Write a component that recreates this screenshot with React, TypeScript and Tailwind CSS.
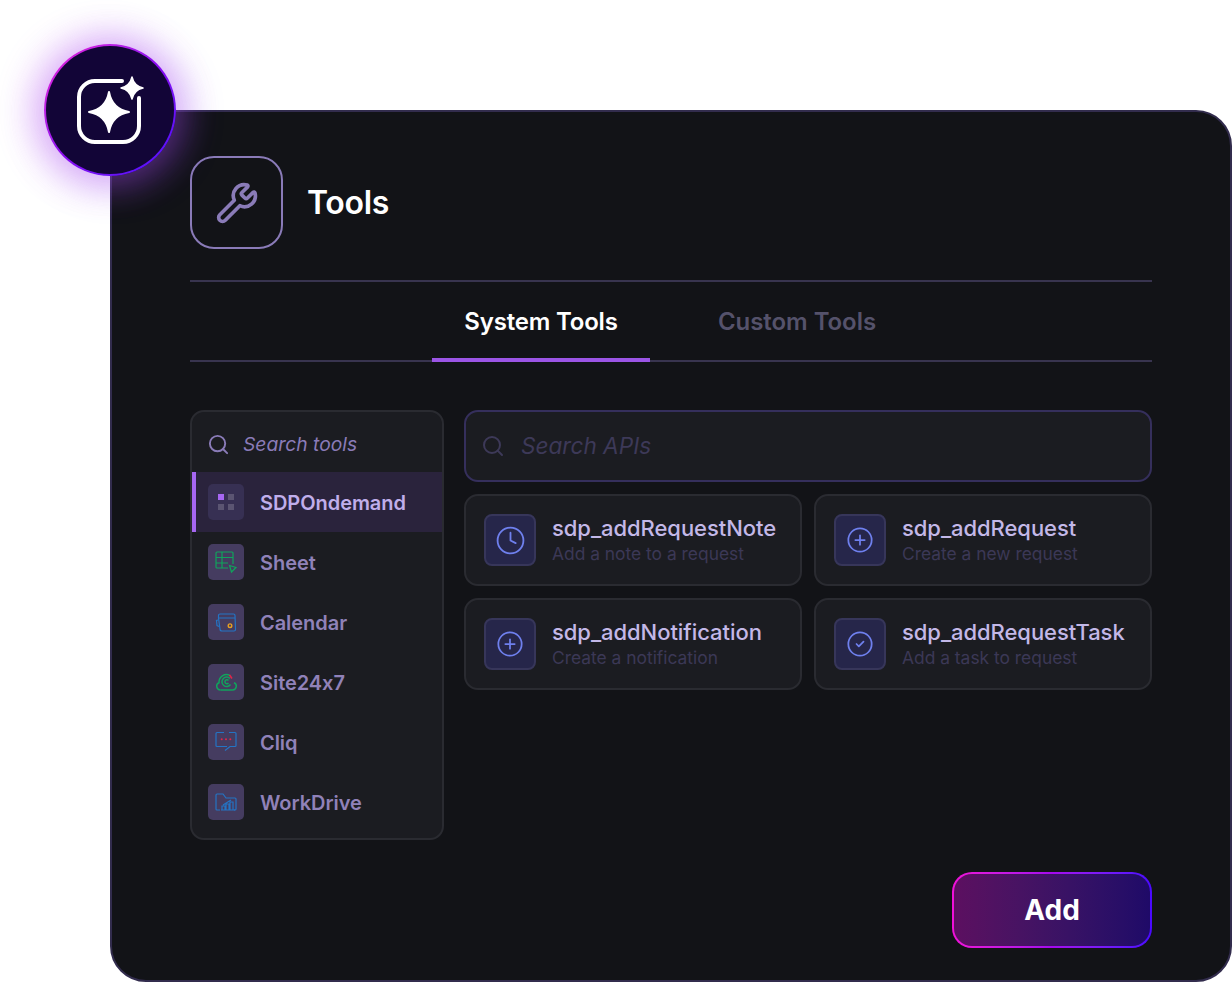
import { CircleCheck, CirclePlus, Clock, Search, Wrench } from "lucide-react";
import type { ReactNode } from "react";

function SparkIcon() {
  return (
    <svg viewBox="2 2 128 128" className="h-[128px] w-[128px]" fill="none">
      <path
        d="M78 37H51a16 16 0 0 0-16 16v29a16 16 0 0 0 16 16h28a16 16 0 0 0 16-16V54"
        stroke="#fff"
        strokeWidth="4"
        strokeLinecap="round"
      />
      <path d="M65 48Q68 65 85 68Q68 71 65 88Q62 71 45 68Q62 65 65 48Z" fill="#fff" stroke="#fff" strokeWidth="2" strokeLinejoin="round" />
      <path d="M88 33Q90 42 99 44Q90 46 88 55Q86 46 77 44Q86 42 88 33Z" fill="#fff" stroke="#fff" strokeWidth="1.5" strokeLinejoin="round" />
    </svg>
  );
}

function GridIcon() {
  return (
    <div className="grid grid-cols-2 gap-1">
      <div className="h-[6px] w-[6px] bg-[#a667f2]" />
      <div className="h-[6px] w-[6px] bg-[#5b5572]" />
      <div className="h-[6px] w-[6px] bg-[#5b5572]" />
      <div className="h-[6px] w-[6px] bg-[#5b5572]" />
    </div>
  );
}

function SheetIcon() {
  return (
    <svg viewBox="0 0 36 36" className="h-9 w-9" fill="none" stroke="#10a35c" strokeWidth="1.200">
      <path d="M25 20V9a1 1 0 0 0-1-1H9a1 1 0 0 0-1 1v14a1 1 0 0 0 1 1h11" />
      <path d="M8 13.500h17M14 8v16M8 19h12" />
      <path d="M21.500 21.500l6.500 2-4.500 4.500z" />
    </svg>
  );
}

function CalendarIcon() {
  return (
    <svg viewBox="0 0 36 36" className="h-9 w-9" fill="none" stroke="#2474c4" strokeWidth="1.200">
      <path d="M10.500 14v-2.500a1.500 1.500 0 0 1 1.500-1.500h13.500a1.500 1.500 0 0 1 1.500 1.500l.5 14a1.500 1.500 0 0 1-1.500 1.500H14a2 2 0 0 1-2-2l-1.500-11z" />
      <path d="M10.500 14H27M10 16l-1.500.5.500 5 2 1" />
      <circle cx="22" cy="21.700" r="1.800" stroke="#e8a020" strokeWidth="1.400" />
    </svg>
  );
}

function SiteIcon() {
  return (
    <svg viewBox="0 0 36 36" className="h-9 w-9" fill="none" stroke="#10a35c" strokeWidth="1.500">
      <path d="M12.500 26h12a3.800 3.800 0 0 0 1.500-7.300" />
      <path d="M12.500 26a3.800 3.800 0 0 1-1.500-7.300 7.500 7.500 0 0 1 11-7.200" />
      <path d="M22 14.500a4.700 4.700 0 1 0 .5 6" />
      <path d="M20.500 16.500a2 2 0 1 0 0 2.500" />
      <path d="M21.500 11l2.500 3.500" stroke="#e0254a" strokeWidth="1.600" />
    </svg>
  );
}

function CliqIcon() {
  return (
    <svg viewBox="0 0 36 36" className="h-9 w-9" fill="none" stroke="#2474c4" strokeWidth="1.200">
      <path d="M16 8.500H9a1 1 0 0 0-1 1V21.500a1 1 0 0 0 1 1h10M21 8.500h6a1 1 0 0 1 1 1V21.500a1 1 0 0 1-1 1h-5l-5 4" />
      <circle cx="13.700" cy="15.300" r="1" fill="#e0254a" stroke="none" />
      <circle cx="18" cy="15.300" r="1" fill="#e0254a" stroke="none" />
      <circle cx="22.300" cy="15.300" r="1" fill="#e0254a" stroke="none" />
    </svg>
  );
}

function DriveIcon() {
  return (
    <svg viewBox="0 0 36 36" className="h-9 w-9" fill="none" stroke="#2474c4" strokeWidth="1.200">
      <path d="M12 26H9a1 1 0 0 1-1-1V11a1 1 0 0 1 1-1h6l3 4h9a1 1 0 0 1 1 1v10a1 1 0 0 1-1 1h-1" />
      <path d="M14 26v-4h3v4M18 26v-6h3v6M22 26v-8h3v8M13 26h14M15 21l4-2.500 4-2.500" />
    </svg>
  );
}

const apps: { name: string; icon: ReactNode }[] = [
  { name: "SDPOndemand", icon: <GridIcon /> },
  { name: "Sheet", icon: <SheetIcon /> },
  { name: "Calendar", icon: <CalendarIcon /> },
  { name: "Site24x7", icon: <SiteIcon /> },
  { name: "Cliq", icon: <CliqIcon /> },
  { name: "WorkDrive", icon: <DriveIcon /> },
];

function BigClock() {
  return <Clock className="h-[31px] w-[31px] text-[#6f80ee]" strokeWidth={1.4} />;
}

function PlusIcon() {
  return <CirclePlus className="h-7 w-7 text-[#6f80ee]" strokeWidth={1.5} />;
}

function CheckIcon() {
  return <CircleCheck className="h-7 w-7 text-[#6f80ee]" strokeWidth={1.5} />;
}

const apis = [
  { name: "sdp_addRequestNote", desc: "Add a note to a request", icon: <BigClock /> },
  { name: "sdp_addRequest", desc: "Create a new request", icon: <PlusIcon /> },
  { name: "sdp_addNotification", desc: "Create a notification", icon: <PlusIcon /> },
  { name: "sdp_addRequestTask", desc: "Add a task to request", icon: <CheckIcon /> },
];

function AppRow({ name, icon, active }: { name: string; icon: ReactNode; active: boolean }) {
  return (
    <div
      className={
        active
          ? "flex h-[60px] items-center gap-4 border-l-4 border-[#a667f2] bg-[#2a233c] pl-3"
          : "flex h-[60px] items-center gap-4 border-l-4 border-transparent pl-3"
      }
    >
      <div
        className={
          active
            ? "flex h-9 w-9 items-center justify-center rounded-[5px] bg-[#373053]"
            : "flex h-9 w-9 items-center justify-center rounded-[5px] bg-[#453c60]"
        }
      >
        {icon}
      </div>
      <span
        className={
          active
            ? "pt-[2px] text-[20px] font-semibold tracking-[-0.05px] text-[#c0aeeb]"
            : "pt-[2px] text-[20px] font-semibold tracking-[-0.05px] text-[#9082b9]"
        }
      >
        {name}
      </span>
    </div>
  );
}

export default function App() {
  return (
    <div className="relative h-[982px] w-[1232px] overflow-hidden bg-white pl-[110px] pt-[110px] font-['Inter',sans-serif]">
      <div className="absolute left-[44px] top-[44px] z-10 h-[132px] w-[132px] rounded-full bg-gradient-to-br from-[#f00fd8] via-[#8a08f0] to-[#4a08ff] p-[2px] shadow-[-4px_0_36px_8px_rgba(210,90,240,0.3),4px_4px_36px_8px_rgba(110,50,240,0.28)]">
        <div className="flex h-full w-full items-center justify-center rounded-full bg-[#120537]">
          <SparkIcon />
        </div>
      </div>

      <div className="flex h-[872px] w-[1122px] flex-col rounded-[36px] border-2 border-[#322c4d] bg-[#121317] px-[78px] pt-[44px]">
        <div className="flex items-center gap-[24px]">
          <div className="flex h-[93px] w-[93px] items-center justify-center rounded-[24px] border-2 border-[#8a7bb8]">
            <Wrench className="h-[44px] w-[44px] text-[#8a7bb8]" strokeWidth={2} />
          </div>
          <span className="pt-[1px] text-[32px] font-semibold tracking-[-0.3px] text-white">Tools</span>
        </div>

        <div className="mt-[31px] h-[2px] bg-[#38344f]" />

        <div className="flex h-[80px] border-b-2 border-[#38344f] pl-[242px]">
          <div className="-mb-[2px] flex w-[218px] items-center justify-center border-b-4 border-[#9b55e6] pt-[4px]">
            <span className="text-[24px] font-semibold tracking-[-0.2px] text-white">System Tools</span>
          </div>
          <div className="flex w-[294px] items-center justify-center pt-[1px]">
            <span className="text-[24px] font-semibold tracking-[-0.05px] text-[#55526b]">Custom Tools</span>
          </div>
        </div>

        <div className="mt-[48px] flex gap-5">
          <div className="flex h-[430px] w-[254px] flex-col overflow-hidden rounded-[14px] border-2 border-[#2a2b31] bg-[#1b1c21]">
            <div className="flex h-[60px] items-center gap-[13px] pl-[15px] pt-[4px]">
              <Search className="h-[23px] w-[23px] text-[#8a7bb8]" strokeWidth={2} />
              <span className="pt-[1px] text-[19.3px] italic text-[#8a7bb8]">Search tools</span>
            </div>
            {apps.map((a, i) => (
              <AppRow key={a.name} name={a.name} icon={a.icon} active={i === 0} />
            ))}
          </div>

          <div className="flex-1">
            <div className="flex h-[72px] items-center gap-[16px] rounded-[14px] border-2 border-[#352f5c] bg-[#1b1c21] pl-[15px]">
              <Search className="h-[24px] w-[24px] text-[#3d3958]" strokeWidth={2} />
              <span className="text-[22.6px] italic text-[#3d3958]">Search APIs</span>
            </div>
            <div className="mt-3 grid grid-cols-2 gap-3">
              {apis.map(({ name, desc, icon }) => (
                <div
                  key={name}
                  className="flex h-[92px] items-center gap-4 rounded-[14px] border-2 border-[#2a2b31] bg-[#1b1c21] pl-[18px]"
                >
                  <div className="flex h-[52px] w-[52px] items-center justify-center rounded-[8px] border-2 border-[#37365a] bg-[#26264a]">
                    {icon}
                  </div>
                  <div className="flex flex-col">
                    <span className="text-[22px] font-medium leading-[26px] tracking-[-0.05px] text-[#c3b8e8]">{name}</span>
                    <span className="pt-[1px] text-[17.4px] leading-[24px] text-[#3b3856]">{desc}</span>
                  </div>
                </div>
              ))}
            </div>
          </div>
        </div>

        <div className="mt-[32px] flex justify-end">
          <div className="h-[76px] w-[200px] rounded-[20px] bg-gradient-to-r from-[#f00fd8] via-[#a508ee] to-[#4a08ff] p-[2px]">
            <div className="flex h-full w-full items-center justify-center rounded-[18px] bg-gradient-to-r from-[#5c0f60] to-[#1f0a68]">
              <span className="text-[28px] font-bold text-white">Add</span>
            </div>
          </div>
        </div>
      </div>
    </div>
  );
}
